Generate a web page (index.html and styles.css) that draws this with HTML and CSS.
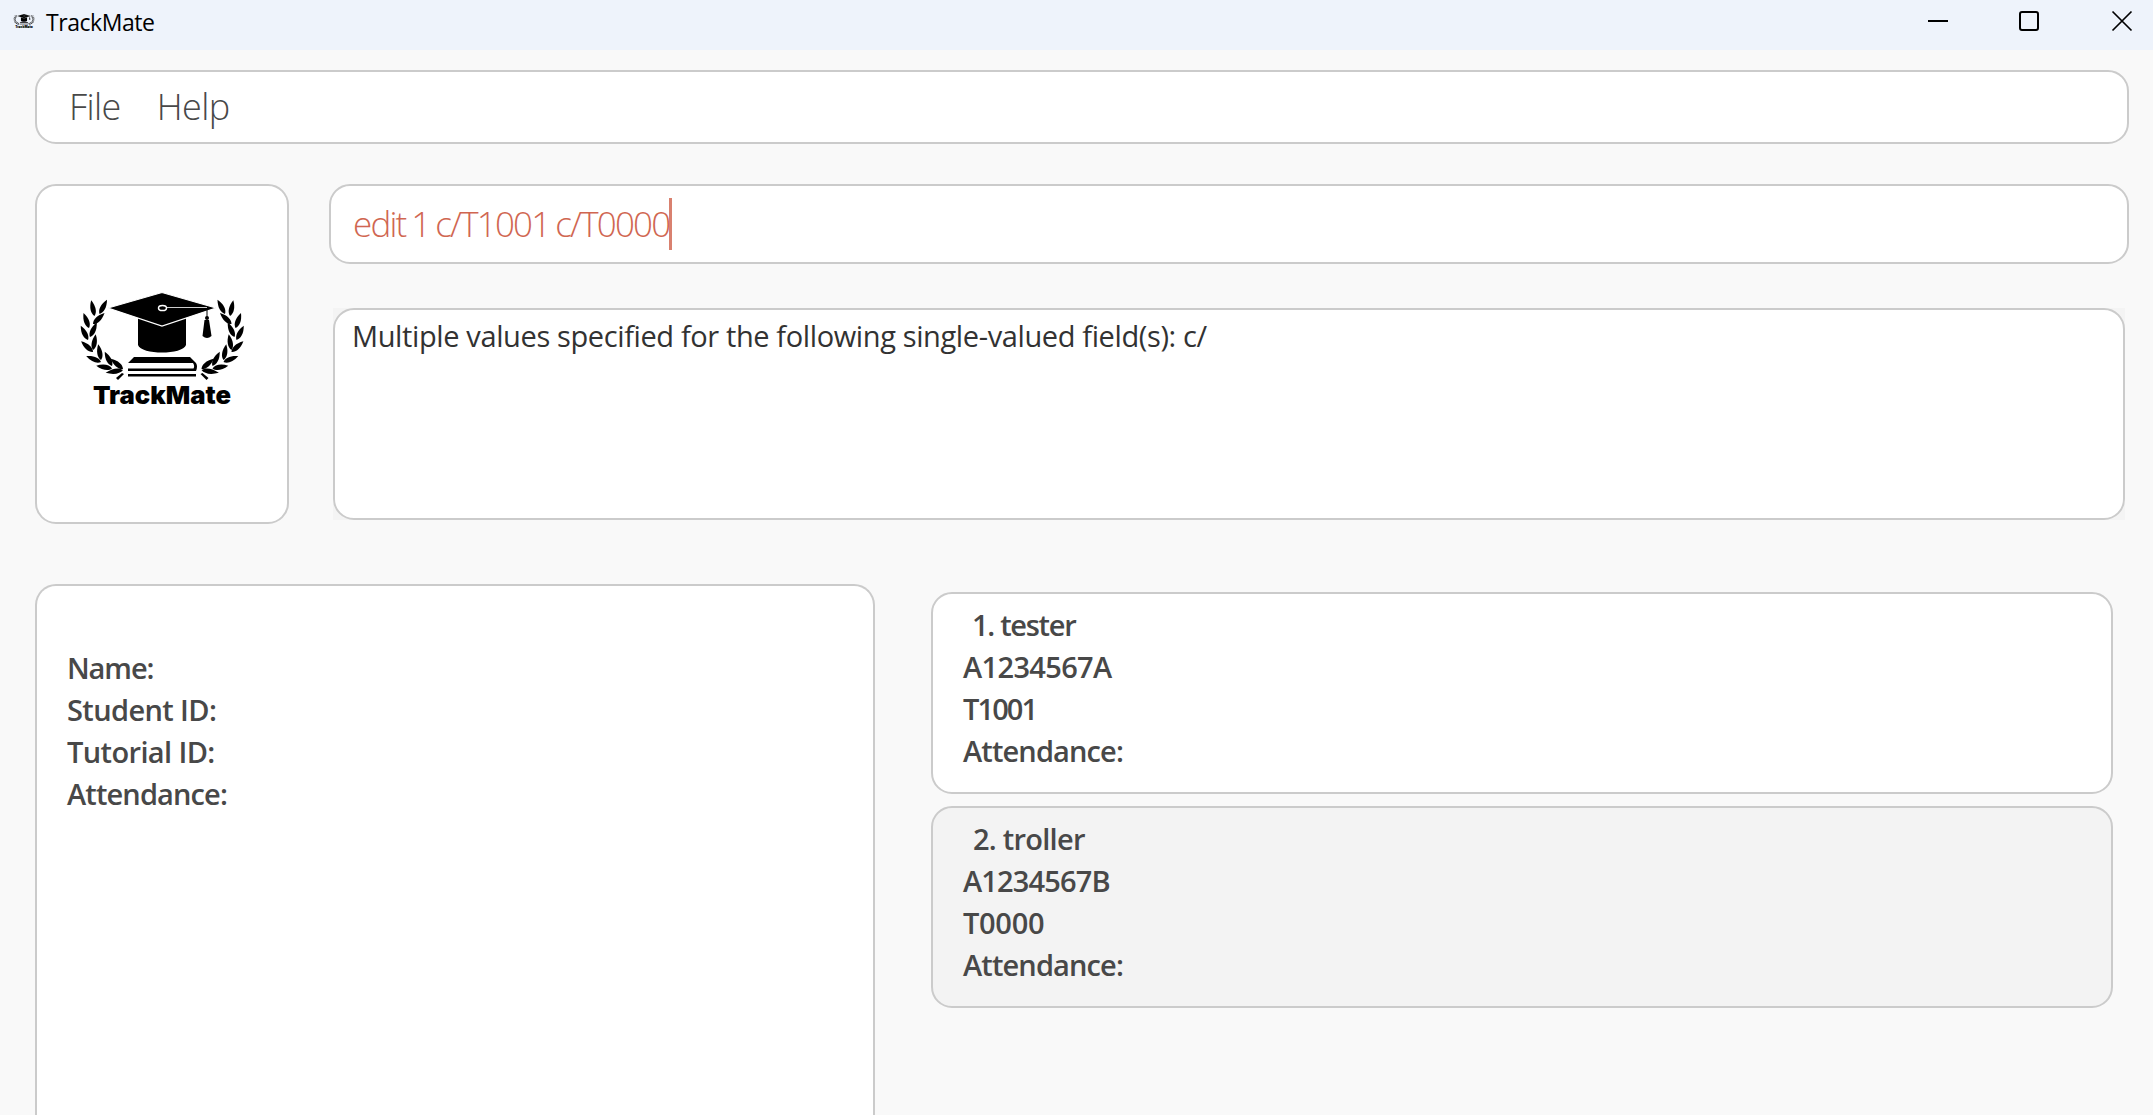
FILE: index.html
```html
<!DOCTYPE html>
<html lang="en">
<head>
<meta charset="utf-8">
<title>TrackMate</title>
<link rel="stylesheet" href="styles.css">
</head>
<body>
<svg class="defs" width="0" height="0">
  <defs>
    <path id="leaf" d="M0 0 C3.2 -3 3.6 -9 0 -16 C-3.6 -9 -3.200 -3 0 0Z"/>
    <g id="laurel">
      <use href="#leaf" transform="translate(99.500 314) rotate(28)"/>
      <use href="#leaf" transform="translate(94.500 316) rotate(-12)"/>
      <use href="#leaf" transform="translate(93 324) rotate(46)"/>
      <use href="#leaf" transform="translate(89 328) rotate(-20)"/>
      <use href="#leaf" transform="translate(90 337) rotate(25)"/>
      <use href="#leaf" transform="translate(88 340) rotate(-27)"/>
      <use href="#leaf" transform="translate(93 350) rotate(10)"/>
      <use href="#leaf" transform="translate(93 352) rotate(-48)"/>
      <use href="#leaf" transform="translate(101 360) rotate(-10)"/>
      <use href="#leaf" transform="translate(101 362) rotate(-68)"/>
      <use href="#leaf" transform="translate(112 366) rotate(-27)"/>
      <use href="#leaf" transform="translate(112 368.500) rotate(-80)"/>
      <use href="#leaf" transform="translate(123 369) rotate(-50)"/>
      <use href="#leaf" transform="translate(123 370) rotate(-99) scale(1 1.1)"/>
      <path d="M116 378 L122 373 L124 374 L118 380Z"/>
    </g>
    <symbol id="logo" viewBox="76 288 172 118">
      <use href="#laurel"/>
      <use href="#laurel" transform="translate(324.5 0) scale(-1 1)"/>
      <path d="M138 317 L162 325.5 L186 317 V345 C183 355 141 355 138 345Z"/>
      <path d="M108 308 L162 292.500 L216 308 L162 326Z" stroke="#fff" stroke-width="1.200"/>
      <path d="M167 307.500 H207" stroke="#ccc" stroke-width="1.200"/>
      <ellipse cx="162.500" cy="308" rx="4" ry="2.600" fill="none" stroke="#fff" stroke-width="1.500"/>
      <path d="M207 310 V318" stroke="#000" stroke-width="1"/>
      <circle cx="207" cy="318" r="2"/>
      <path d="M204.500 320 H209 L211.500 336 Q207 340 202.500 336Z"/>
      <path d="M134 357 H190 L196 363 Q198 366 196 371 H128 V368.500 H193.500 Q195 366 193 363 H128Z"/>
      <path d="M128 374 H196 V376.500 H128Z"/>
      <text x="93" y="403.500" textLength="138" lengthAdjust="spacingAndGlyphs" class="wordmark">TrackMate</text>
    </symbol>
  </defs>
</svg>
<header class="titlebar">
  <svg class="app-icon"><use href="#logo"/></svg>
  <span class="title">TrackMate</span>
  <svg class="controls" width="206" height="20" fill="none" stroke="#000" stroke-width="2">
    <path d="M0 10H20"/>
    <rect x="92" y="1" width="18" height="18" rx="2"/>
    <path d="M184.500 .5L203.500 19.500M203.500 .5L184.500 19.500" stroke-width="1.700"/>
  </svg>
</header>
<nav class="menubar panel"><span class="file">File</span><span class="help">Help</span></nav>
<section class="top">
  <div class="logo-box panel"><svg class="logo"><use href="#logo"/></svg></div>
  <div class="right">
    <div class="command panel"><span class="command-text">edit 1 c/T1001 c/T0000</span><i class="caret"></i></div>
    <div class="result-wrap"><div class="result panel"><span class="result-text">Multiple values specified for the following single-valued field(s): c/</span></div></div>
  </div>
</section>
<main class="bottom">
  <div class="details panel">
    <p class="name-label">Name:</p><p class="id-label">Student ID:</p><p class="id-label">Tutorial ID:</p><p>Attendance:</p>
  </div>
  <div class="list">
    <article class="card panel"><p class="first tester">1. tester</p><p class="student-id">A1234567A</p><p class="tutorial">T1001</p><p>Attendance:</p></article>
    <article class="card panel alt"><p class="first">2. troller</p><p class="student-id-alt">A1234567B</p><p class="tutorial-alt">T0000</p><p>Attendance:</p></article>
  </div>
</main>
</body>
</html>
```
FILE: styles.css
```css
* { box-sizing: border-box; }
body { margin: 0; height: 1115px; overflow: hidden; background: #f9f9f9; font-family: "Open Sans", "Noto Sans", sans-serif; color: #484848; }
p { margin: 0; }
span { white-space: nowrap; }
.defs { display: block; height: 0; }
.panel { background: #fff; border: 2px solid #cbcbcb; border-radius: 21px; }
.titlebar { height: 50px; background: #eef3fb; display: flex; align-items: flex-start; }
.app-icon { width: 22px; height: 16px; margin: 13px 0 0 13px; }
.title { margin: 5px 0 0 11px; font-size: 23px; line-height: 34px; letter-spacing: -.45px; color: #000; }
.controls { margin: 11px 19px 0 auto; overflow: visible; }
.menubar { height: 74px; margin: 20px 24px 0 35px; padding-left: 32px; display: flex; gap: 36px; font-size: 36px; font-weight: 300; line-height: 70px; letter-spacing: -.6px; }
.top { display: flex; gap: 40px; margin: 40px 24px 0 35px; }
.logo-box { width: 254px; height: 340px; display: flex; justify-content: center; padding-top: 102px; }
.logo { width: 172px; height: 118px; }
.wordmark { font-family: Inter, sans-serif; font-weight: 900; font-size: 25px; }
.right { flex: 1; }
.command { height: 80px; padding-left: 22px; display: flex; align-items: center; font-size: 35px; font-weight: 300; color: #d06651; }
.command-text { margin-top: -2px; letter-spacing: -1.8px; word-spacing: -1.5px; }
.caret { width: 3px; height: 52px; background: #d9816f; }
.result-wrap { margin: 44px 4px 0; background: #f4f4f4; }
.result { height: 212px; padding: 4px 0 0 17px; font-size: 29px; line-height: 44px; letter-spacing: -.38px; color: #323232; }
.bottom { display: flex; margin: 60px 40px 0 35px; }
.details { width: 840px; height: 531px; padding: 61px 0 0 30px; border-bottom: 0; border-radius: 21px 21px 0 0; }
.details, .list { font-size: 29px; font-weight: 600; line-height: 42px; letter-spacing: -.87px; }
.list { flex: 1; margin: 8px 0 0 56px; }
.card { height: 202px; padding: 10px 0 0 30px; margin-bottom: 12px; }
.card:last-child { margin-bottom: 0; }
.first { padding-left: 10px; letter-spacing: -.75px; }
.tester { padding-left: 9px; letter-spacing: -1.3px; }
.name-label { letter-spacing: -1.1px; }
.id-label { letter-spacing: -.62px; }
.student-id { letter-spacing: -.65px; }
.student-id-alt { letter-spacing: -.85px; }
.tutorial { letter-spacing: -1.9px; }
.tutorial-alt { letter-spacing: -.3px; }
.alt { background: #f3f3f3; }
```
